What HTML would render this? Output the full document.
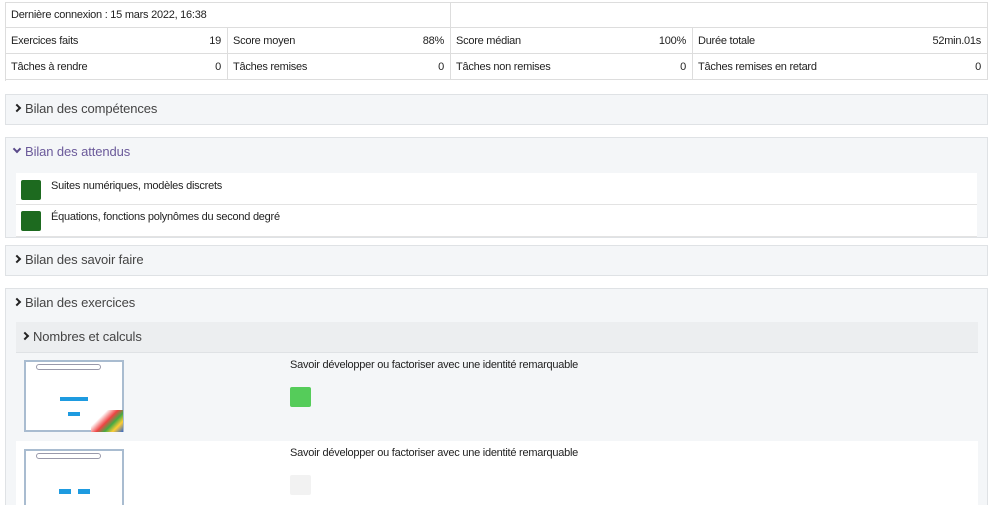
<!DOCTYPE html><html><head><meta charset="utf-8"><style>
html,body{margin:0;width:1004px;height:505px;overflow:hidden}
body{background:#fff;font-family:"Liberation Sans",sans-serif;position:relative}
.a{position:absolute;box-sizing:border-box}
.c{font-size:11px;letter-spacing:-0.25px;color:#222;display:flex;align-items:center;justify-content:space-between;padding:0 6px 0 5px;border-right:1px solid #ddd;border-bottom:1px solid #ddd}
.p{background:#f4f6f8;border:1px solid #dfe2e5}
.h{font-size:13px;letter-spacing:-0.1px;color:#444;position:absolute}
.chev{display:inline-block;width:4px;height:4px;border-right:2px solid #222;border-bottom:2px solid #222;transform:rotate(-45deg);margin-right:5px;vertical-align:2px}
.t{font-size:11px;letter-spacing:-0.25px;color:#222}
.th{background:#fff;border:2px solid #a9bcd0}
</style></head><body>
<div class="a" style="left:5px;top:2px;width:983px;height:79px;border:1px solid #ddd;border-right:none;border-bottom:none"></div>
<div class="a c" style="left:5px;top:2px;width:446px;height:26px;border-left:1px solid #ddd;border-top:1px solid #ddd">Dernière connexion : 15 mars 2022, 16:38</div>
<div class="a c" style="left:451px;top:2px;width:537px;height:26px;border-top:1px solid #ddd"></div>
<div class="a c" style="left:5px;top:28px;width:223px;height:26px;border-left:1px solid #ddd"><span>Exercices faits</span><span>19</span></div>
<div class="a c" style="left:228px;top:28px;width:223px;height:26px"><span>Score moyen</span><span>88%</span></div>
<div class="a c" style="left:451px;top:28px;width:242px;height:26px"><span>Score médian</span><span>100%</span></div>
<div class="a c" style="left:693px;top:28px;width:295px;height:26px"><span>Durée totale</span><span>52min.01s</span></div>
<div class="a c" style="left:5px;top:54px;width:223px;height:26px;border-left:1px solid #ddd"><span>Tâches à rendre</span><span>0</span></div>
<div class="a c" style="left:228px;top:54px;width:223px;height:26px"><span>Tâches remises</span><span>0</span></div>
<div class="a c" style="left:451px;top:54px;width:242px;height:26px"><span>Tâches non remises</span><span>0</span></div>
<div class="a c" style="left:693px;top:54px;width:295px;height:26px"><span>Tâches remises en retard</span><span>0</span></div>

<div class="a p" style="left:5px;top:94px;width:983px;height:31px"></div>
<div class="h" style="left:14px;top:101px"><span class="chev"></span>Bilan des compétences</div>

<div class="a p" style="left:5px;top:137px;width:983px;height:101px"></div>
<div class="h" style="left:14px;top:144px;color:#6b5a9a"><span class="chev" style="transform:rotate(45deg);border-color:#5a4a8a;vertical-align:4px"></span>Bilan des attendus</div>
<div class="a" style="left:16px;top:173px;width:961px;height:32px;background:#fff;border-bottom:1px solid #e3e3e3"></div>
<div class="a" style="left:16px;top:205px;width:961px;height:32px;background:#fff;border-bottom:1px solid #e3e3e3"></div>
<div class="a" style="left:21px;top:180px;width:20px;height:20px;background:#1d6a1f;border-radius:2px"></div>
<div class="a" style="left:21px;top:211px;width:20px;height:20px;background:#1d6a1f;border-radius:2px"></div>
<div class="a t" style="left:51px;top:180px">Suites numériques, modèles discrets</div>
<div class="a t" style="left:51px;top:211px">Équations, fonctions polynômes du second degré</div>

<div class="a p" style="left:5px;top:245px;width:983px;height:31px"></div>
<div class="h" style="left:14px;top:252px"><span class="chev"></span>Bilan des savoir faire</div>

<div class="a p" style="left:5px;top:288px;width:983px;height:230px"></div>
<div class="h" style="left:14px;top:295px"><span class="chev"></span>Bilan des exercices</div>
<div class="a" style="left:16px;top:322px;width:962px;height:31px;background:#eceef0;border-bottom:1px solid #dfe2e5"></div>
<div class="h" style="left:22px;top:329px"><span class="chev"></span>Nombres et calculs</div>
<div class="a" style="left:16px;top:441px;width:962px;height:70px;background:#fff"></div>
<div class="a th" style="left:24px;top:360px;width:100px;height:72px">
<div class="a" style="left:10px;top:2px;width:65px;height:6px;border:1px solid #99a;border-radius:3px"></div>
<div class="a" style="left:34px;top:35px;width:28px;height:4px;background:#1e9be0"></div>
<div class="a" style="left:42px;top:50px;width:12px;height:4px;background:#1e9be0"></div>
<div class="a" style="left:65px;top:48px;width:32px;height:22px;background:linear-gradient(135deg,#fff 30%,#e44 50%,#4a4 65%,#fc3 80%,#36c)"></div>
</div>
<div class="a th" style="left:24px;top:449px;width:100px;height:60px">
<div class="a" style="left:10px;top:2px;width:65px;height:6px;border:1px solid #99a;border-radius:3px"></div>
<div class="a" style="left:33px;top:38px;width:12px;height:5px;background:#1e9be0"></div>
<div class="a" style="left:52px;top:38px;width:12px;height:5px;background:#1e9be0"></div>
</div>
<div class="a t" style="left:290px;top:359px">Savoir développer ou factoriser avec une identité remarquable</div>
<div class="a" style="left:290px;top:387px;width:21px;height:20px;background:#55cc5a;border-radius:2px"></div>
<div class="a t" style="left:290px;top:447px">Savoir développer ou factoriser avec une identité remarquable</div>
<div class="a" style="left:290px;top:475px;width:21px;height:20px;background:#f2f2f2;border-radius:2px"></div>
</body></html>
